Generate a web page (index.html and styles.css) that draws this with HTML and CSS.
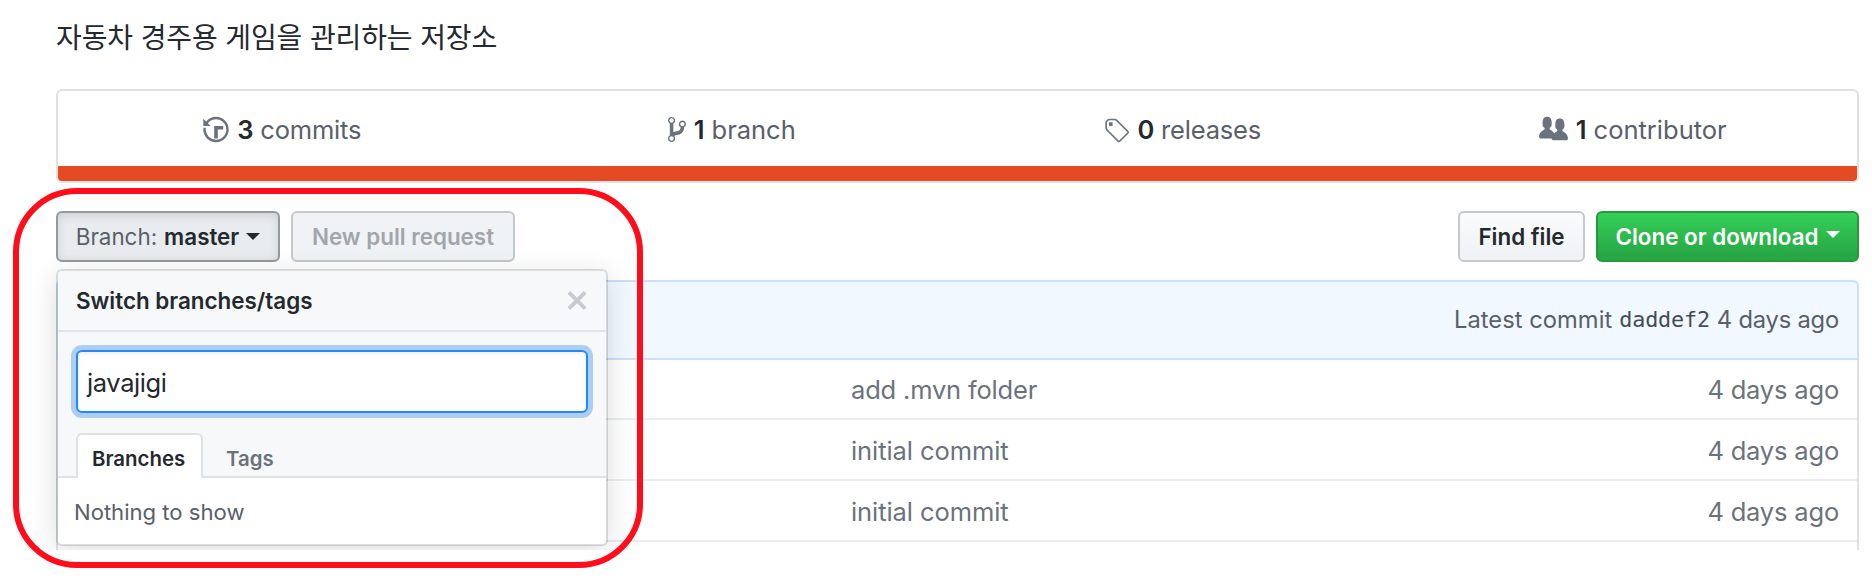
FILE: index.html
```html
<!DOCTYPE html>
<html lang="ko">
<head>
<meta charset="utf-8">
<title>Repository</title>
<link rel="stylesheet" href="styles.css">
</head>
<body>
<main class="repo">
  <p class="description">자동차 경주용 게임을 관리하는 저장소</p>

  <section class="summary">
    <ul class="stats">
      <li class="stat">
        <svg class="icon icon-14" viewBox="0 0 14 16"><path d="M8 13H6V6h5v2H8v5zM7 1C4.81 1 2.87 2.02 1.59 3.59L0 2v4h4L2.5 4.5C3.55 3.17 5.17 2.3 7 2.3c3.14 0 5.7 2.56 5.7 5.7s-2.56 5.7-5.7 5.7A5.71 5.71 0 0 1 1.3 8c0-.34.03-.67.09-1H.08C.03 7.33 0 7.66 0 8c0 3.86 3.14 7 7 7s7-3.14 7-7-3.14-7-7-7z"/></svg>
        <b class="num">3</b><span>commits</span>
      </li>
      <li class="stat stat-wide">
        <svg class="icon icon-10" viewBox="0 0 10 16"><path d="M10 5c0-1.11-.89-2-2-2a1.993 1.993 0 0 0-1 3.72v.3c-.02.52-.23.98-.63 1.38-.4.4-.86.61-1.38.63-.83.02-1.48.16-2 .45V4.72a1.993 1.993 0 0 0-1-3.72C.88 1 0 1.89 0 3a2 2 0 0 0 1 1.72v6.56c-.59.35-1 .99-1 1.72 0 1.11.89 2 2 2 1.11 0 2-.89 2-2 0-.53-.2-1-.53-1.36.09-.06.48-.41.59-.47.25-.11.56-.17.94-.17 1.05-.05 1.95-.45 2.75-1.25S8.95 7.77 9 6.73h-.02C9.59 6.37 10 5.73 10 5zM2 1.8c.66 0 1.2.55 1.2 1.2 0 .65-.55 1.2-1.2 1.2C1.35 4.2.8 3.65.8 3c0-.65.55-1.2 1.2-1.2zm0 12.41c-.66 0-1.2-.55-1.2-1.2 0-.65.55-1.2 1.2-1.2.65 0 1.2.55 1.2 1.2 0 .65-.55 1.2-1.2 1.2zm6-8c-.66 0-1.2-.55-1.2-1.2 0-.65.55-1.2 1.2-1.2.65 0 1.2.55 1.2 1.2 0 .65-.55 1.2-1.2 1.2z"/></svg>
        <b class="num">1</b><span>branch</span>
      </li>
      <li class="stat stat-releases">
        <svg class="icon icon-14" viewBox="0 0 14 16"><path d="M6.73 2.73c-.47-.47-1.11-.73-1.77-.73H2.5C1.13 2 0 3.13 0 4.5v2.47c0 .66.27 1.3.73 1.77l6.06 6.06c.39.39 1.02.39 1.41 0l4.59-4.59a.996.996 0 0 0 0-1.41L6.73 2.73zM1.38 8.09c-.31-.3-.47-.7-.47-1.13V4.5c0-.88.72-1.59 1.59-1.59h2.47c.42 0 .83.16 1.13.47l6.14 6.13-4.73 4.73-6.13-6.15zM2.01 4h2v2h-2V4z"/></svg>
        <b class="num">0</b><span>releases</span>
      </li>
      <li class="stat stat-wide">
        <svg class="icon icon-16" viewBox="0 0 16 16"><path d="M16 12.999c0 .439-.45 1-1 1H7.995c-.539 0-.994-.447-.995-.999H1c-.54 0-1-.561-1-1 0-2.634 3-4 3-4s.229-.409 0-1c-.841-.621-1.058-.59-1-3 .058-2.419 1.367-3 2.5-3s2.442.58 2.5 3c.058 2.41-.159 2.379-1 3-.229.59 0 1 0 1s1.549.711 2.42 2.088C9.196 9.369 10 8.999 10 8.999s.229-.409 0-1c-.841-.62-1.058-.59-1-3 .058-2.419 1.367-3 2.5-3s2.437.581 2.495 3c.059 2.41-.158 2.38-1 3-.229.59 0 1 0 1s3.005 1.366 3.005 4"/></svg>
        <b class="num">1</b><span>contributor</span>
      </li>
    </ul>
    <div class="language-bar"></div>
  </section>

  <div class="toolbar">
    <div class="branch-menu">
      <button class="btn btn-branch"><span class="muted">Branch:</span> <span>master</span><i class="caret"></i></button>
      <div class="dropdown">
        <div class="dropdown-header">
          <span class="dropdown-title">Switch branches/tags</span>
          <svg class="icon icon-close" viewBox="0 0 12 16"><path d="M7.48 8l3.75 3.75-1.48 1.48L6 9.48l-3.75 3.75-1.48-1.48L4.52 8 .77 4.25l1.48-1.48L6 6.52l3.75-3.75 1.48 1.48z"/></svg>
        </div>
        <div class="filter">
          <div class="field">javajigi</div>
          <div class="tabs">
            <span class="tab tab-active">Branches</span>
            <span class="tab">Tags</span>
          </div>
        </div>
        <div class="empty">Nothing to show</div>
      </div>
    </div>
    <button class="btn btn-disabled">New pull request</button>
    <button class="btn btn-find">Find file</button>
    <button class="btn btn-clone"><span>Clone or download</span><i class="caret"></i></button>
  </div>

  <section class="files">
    <div class="latest"><span class="latest-label">Latest commit</span><code class="sha">daddef2</code><span>4 days ago</span></div>
    <div class="row"><span>add .mvn folder</span><span>4 days ago</span></div>
    <div class="row"><span class="initial">initial commit</span><span>4 days ago</span></div>
    <div class="row"><span class="initial">initial commit</span><span>4 days ago</span></div>
  </section>
</main>
<div class="highlight"></div>
</body>
</html>
```
FILE: styles.css
```css
* { box-sizing: border-box; }

body {
  margin: 0;
  background: #fff;
  color: #24292e;
  font-family: Inter, "Noto Sans CJK KR", sans-serif;
  font-size: 25.5px;
  letter-spacing: -0.18px;
  line-height: 38px;
}

.repo {
  height: 550px;
  padding: 17px 13px 0 56px;
  overflow: hidden;
}

.description {
  height: 38px;
  margin: 0 0 34px;
  font-family: "Noto Sans CJK KR", sans-serif;
  font-size: 28px;
  letter-spacing: -0.12px;
  white-space: nowrap;
}

.summary {
  height: 94px;
  border: 2px solid #dfe2e5;
  border-radius: 6px;
  overflow: hidden;
}

.stats {
  display: flex;
  height: 75px;
  margin: 0;
  padding: 0;
  list-style: none;
}

.stat {
  flex: 1;
  display: flex;
  align-items: center;
  justify-content: center;
  padding-top: 2px;
  color: #586069;
}

.stat-wide { padding-left: 1px; letter-spacing: 0; }
.stat-releases { padding-left: 3px; }

.num {
  margin: 0 7px 0 8px;
  color: #24292e;
  font-weight: 600;
}

.stat-releases .num { margin-left: 6px; }

.icon { height: 29px; fill: #6a737d; }
.icon-10 { width: 18px; }
.icon-14 { width: 26px; }
.icon-16 { width: 29px; }

.language-bar { height: 15px; background: #e44b23; }

.toolbar {
  display: flex;
  height: 51px;
  margin-top: 28px;
}

.branch-menu { position: relative; }

.btn {
  display: flex;
  align-items: center;
  justify-content: center;
  height: 51px;
  padding: 0 0 1px;
  border: 2px solid #c6cacd;
  border-radius: 6px;
  background: linear-gradient(#fafbfc, #eff3f6 90%);
  color: #24292e;
  font-family: inherit;
  font-size: 22.4px;
  font-weight: 600;
  letter-spacing: 0;
  white-space: nowrap;
}

.btn-branch {
  gap: 7px;
  width: 224px;
  border-color: #959a9f;
  background: #e9ecef;
  box-shadow: inset 0 3px 8px rgba(27, 31, 35, 0.13);
}

.muted { color: #586069; font-weight: 400; }

.caret {
  border: 7px solid transparent;
  border-top-color: currentColor;
  border-bottom: 0;
}

.btn-disabled {
  width: 224px;
  margin-left: 11px;
  border-color: #c4c9cd;
  background: #eff3f6;
  color: #a2a6aa;
}

.btn-find { width: 127px; margin-left: auto; }

.btn-clone {
  gap: 7px;
  width: 263px;
  margin-left: 11px;
  border-color: #279840;
  background: linear-gradient(#34d058, #28a745 90%);
  color: #fff;
}

.btn-clone .caret { margin-bottom: 4px; }

.dropdown {
  position: absolute;
  z-index: 1;
  top: 58px;
  left: 0;
  width: 552px;
  height: 277px;
  border: 2px solid rgba(27, 31, 35, 0.15);
  border-radius: 6px;
  background: #fff;
  background-clip: padding-box;
  box-shadow: 0 5px 27px rgba(27, 31, 35, 0.15);
}

.dropdown-header {
  display: flex;
  align-items: center;
  justify-content: space-between;
  height: 61px;
  padding: 0 18px;
  border-bottom: 2px solid #e1e4e8;
  border-radius: 4px 4px 0 0;
  background: #f6f8fa;
}

.dropdown-title {
  font-size: 22.4px;
  font-weight: 600;
  letter-spacing: 0;
}

.icon-close { width: 22px; fill: #c6cbd1; }

.filter {
  display: flex;
  flex-direction: column;
  justify-content: space-between;
  height: 146px;
  padding: 18px 18px 0;
  border-bottom: 2px solid #dfe2e5;
  background: #f6f8fa;
}

.field {
  height: 63px;
  padding: 0 9px;
  border: 2px solid #2188ff;
  border-radius: 6px;
  background: #fff;
  box-shadow: inset 0 2px 4px rgba(27, 31, 35, 0.075), 0 0 0 5px #adcef2;
  letter-spacing: -0.4px;
  line-height: 61px;
}

.tabs { display: flex; height: 45px; margin-bottom: -2px; }

.tab {
  padding: 4px 23px 0;
  color: #6a737d;
  font-size: 20.4px;
  font-weight: 600;
  letter-spacing: 0;
  line-height: 43px;
}

.tab-active {
  width: 127px;
  padding: 2px 0 0 14px;
  border: 2px solid #dfe2e5;
  border-bottom: 0;
  border-radius: 6px 6px 0 0;
  background: #fff;
  color: #24292e;
}

.empty {
  padding: 0 16px;
  color: #586069;
  font-size: 22.1px;
  letter-spacing: 0;
  line-height: 68px;
}

.files {
  height: 300px;
  margin-top: 18px;
  border: 2px solid #dfe2e5;
  border-top: 0;
  border-radius: 6px;
}

.latest {
  display: flex;
  align-items: center;
  justify-content: flex-end;
  height: 80px;
  margin: 0 -2px -1px;
  padding: 0 18px;
  border: 2px solid #c8e1ff;
  border-radius: 6px 6px 0 0;
  background: #f1f8ff;
  color: #586069;
  font-size: 23.7px;
}

.latest-label { letter-spacing: 0.05px; }

.sha {
  margin: 0 7px;
  color: #444d56;
  font-family: "DejaVu Sans Mono", monospace;
  font-size: 21.8px;
}

.row {
  display: flex;
  align-items: center;
  justify-content: space-between;
  height: 61px;
  padding: 3px 18px 0 793px;
  border-bottom: 2px solid #eaecef;
  color: #6a737d;
}

.initial { letter-spacing: -0.08px; }

.highlight {
  position: absolute;
  z-index: 2;
  top: 188px;
  left: 13px;
  width: 630px;
  height: 380px;
  border: 6px solid #ff0d1b;
  border-radius: 64px;
  pointer-events: none;
}
```
